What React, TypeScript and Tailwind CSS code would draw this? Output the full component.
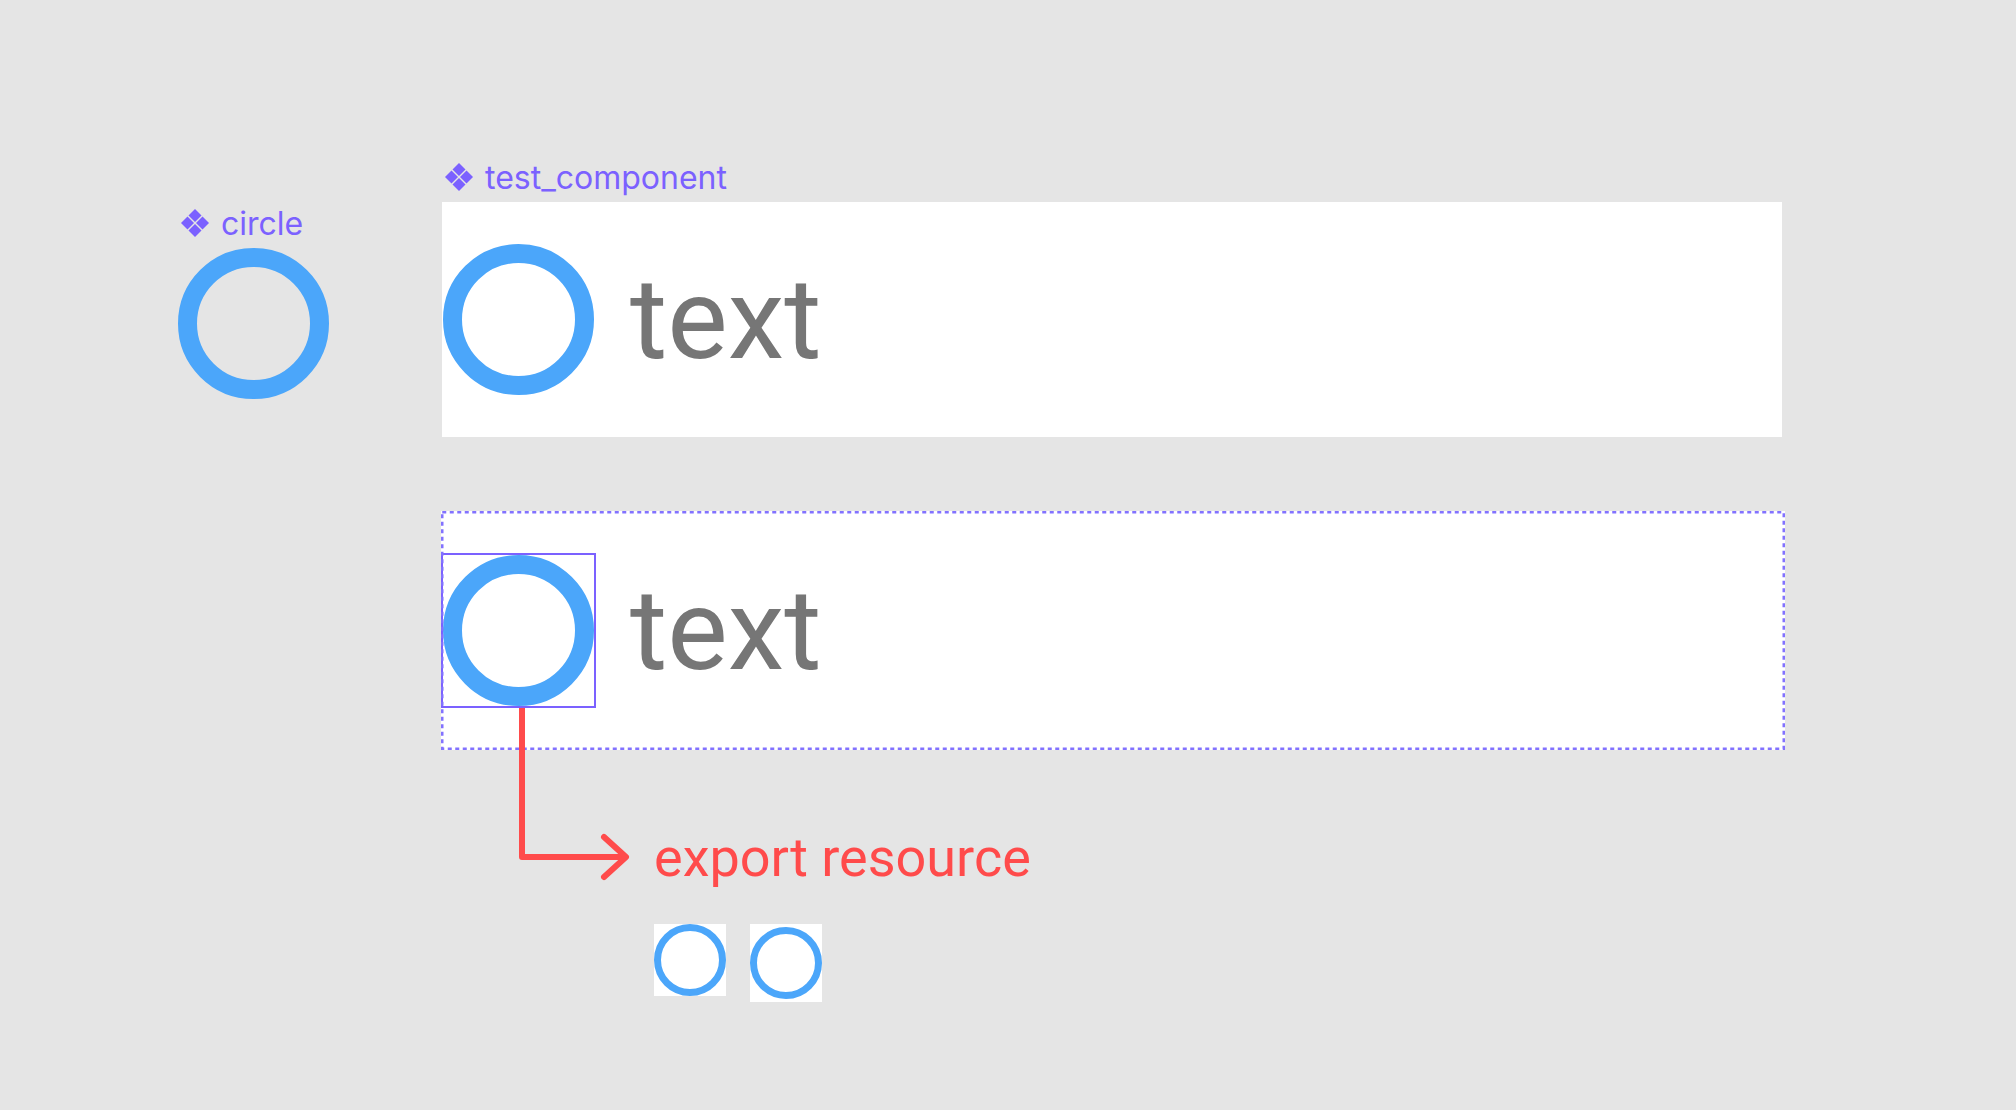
import React from 'react';

// Figma-style component glyph: four small diamonds arranged in a diamond
function ComponentIcon() {
    return (
        <svg width="30" height="30" viewBox="0 0 30 30" fill="#7b61ff">
            <polygon points="15,1 21.5,7.5 15,14 8.5,7.5" />
            <polygon points="7.5,8.5 14,15 7.5,21.5 1,15" />
            <polygon points="22.5,8.5 29,15 22.5,21.5 16,15" />
            <polygon points="15,16 21.5,22.5 15,29 8.5,22.5" />
        </svg>
    );
}

function Label({ name, offset }: { name: string; offset: string }) {
    return (
        <div className={`flex items-center h-[30px] gap-[11px] ${offset}`}>
            <ComponentIcon />
            <span className="mt-[2px] text-[32px] leading-none text-[#7b61ff] font-['Inter',sans-serif]">{name}</span>
        </div>
    );
}

function Ring({ size, stroke }: { size: string; stroke: string }) {
    return <div className={`${size} ${stroke} shrink-0 rounded-full border-[#4ba6fa]`} />;
}

const bodyText = "text-[114px] leading-[1.172] text-[#767676] font-['Roboto',sans-serif]";

export default function App() {
    return (
        <div className="w-full h-[1110px] bg-[#e5e5e5] flex items-start pl-[178px]">
            {/* Left: circle component */}
            <div className="flex flex-col pt-[208px]">
                <Label name="circle" offset="ml-[2px]" />
                <div className="mt-[10px]">
                    <Ring size="w-[151px] h-[151px]" stroke="border-[19px]" />
                </div>
            </div>

            {/* Right: test_component and its instance */}
            <div className="flex flex-col ml-[112px] pt-[162px]">
                <Label name="test_component" offset="ml-[3px]" />

                <div className="mt-[10px] ml-[1px] w-[1340px] h-[235px] bg-white flex items-center pl-[1px]">
                    <Ring size="w-[151px] h-[151px]" stroke="border-[19px]" />
                    <span className={`ml-[36px] ${bodyText}`}>text</span>
                </div>

                <div className="relative mt-[74px] w-[1344px] h-[239px] bg-white flex items-center">
                    <div className="w-[155px] h-[155px] border-2 border-[#7b61ff] flex items-center justify-center">
                        <Ring size="w-[151px] h-[151px]" stroke="border-[19px]" />
                    </div>
                    <span className={`ml-[34px] ${bodyText}`}>text</span>
                    {/* selection outline */}
                    <svg className="absolute inset-0 pointer-events-none" width="1344" height="239">
                        <rect
                            x="1.25"
                            y="1.25"
                            width="1341.5"
                            height="236.5"
                            fill="none"
                            stroke="#8272ff"
                            strokeWidth="2.5"
                            strokeDasharray="4 3.5"
                        />
                    </svg>
                </div>

                <div className="relative pl-[213px] pt-[76px]">
                    <svg className="absolute left-0 top-[-45px]" width="200" height="180" fill="none">
                        <path d="M81 3 V152 H185" stroke="#ff4b4b" strokeWidth="6" strokeLinejoin="round" />
                        <path d="M163 132 L185 152 L163 172" stroke="#ff4b4b" strokeWidth="6" strokeLinecap="round" strokeLinejoin="round" />
                    </svg>
                    <p className="text-[54px] leading-[1.172] text-[#ff4b4b] font-['Roboto',sans-serif]">export resource</p>
                    <div className="mt-[35px] flex items-start gap-[24px]">
                        <div className="w-[72px] h-[72px] bg-white">
                            <Ring size="w-[72px] h-[72px]" stroke="border-[7px]" />
                        </div>
                        <div className="w-[72px] h-[78px] bg-white flex items-center">
                            <Ring size="w-[72px] h-[72px]" stroke="border-[7px]" />
                        </div>
                    </div>
                </div>
            </div>
        </div>
    );
}
